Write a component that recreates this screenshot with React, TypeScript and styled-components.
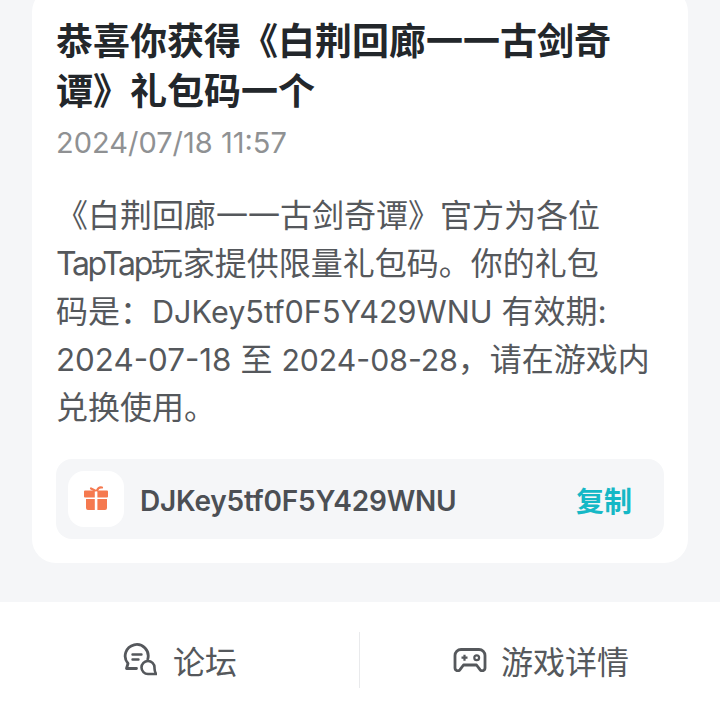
import React, { ReactElement } from 'react';
import styled, { createGlobalStyle } from 'styled-components';

const GlobalStyle = createGlobalStyle`
  html, body {
    margin: 0;
    padding: 0;
    background: #f5f6f8;
    font-family: Inter, "Noto Sans CJK SC", sans-serif;
  }
`;

const Page = styled.div`
  width: 720px;
  height: 718px;
  overflow: hidden;
  display: flex;
  flex-direction: column;
  background: #f5f6f8;
`;

const Card = styled.div`
  margin: -12px 32px 0 32px;
  height: 575px;
  box-sizing: border-box;
  padding: 29px 24px 24px 24px;
  background: #fff;
  border-radius: 24px;
  display: flex;
  flex-direction: column;
`;

const Title = styled.h1`
  margin: 0;
  font-size: 37px;
  line-height: 50px;
  font-weight: 700;
  color: #23272b;
`;

const DateText = styled.div`
  margin-top: 6px;
  font-size: 29px;
  line-height: 40px;
  color: #8f9193;
`;

const Body = styled.p`
  margin: 29px 0 0 0;
  font-size: 32px;
  line-height: 48px;
  color: #55585c;
`;

const Brand = styled.span`
  letter-spacing: -2.4px;
`;

const Latin = styled.span<{ $size: number }>`
  font-size: ${({ $size }) => $size}px;
`;

const CodeBar = styled.div`
  flex-shrink: 0;
  margin-top: 27px;
  height: 80px;
  box-sizing: border-box;
  padding: 0 32px 0 12px;
  display: flex;
  align-items: center;
  background: #f5f6f8;
  border-radius: 16px;
`;

const GiftBox = styled.div`
  width: 56px;
  height: 56px;
  border-radius: 16px;
  background: #fff;
  display: flex;
  align-items: center;
  justify-content: center;
`;

const Code = styled.div`
  flex: 1;
  margin: 3px 0 0 16px;
  font-size: 28px;
  font-weight: 600;
  letter-spacing: -0.2px;
  color: #4c4f54;
`;

const Copy = styled.div`
  margin-top: 2px;
  font-size: 28px;
  font-weight: 700;
  color: #15b8c6;
`;

const Footer = styled.div`
  margin-top: 39px;
  flex: 1;
  background: #fff;
  display: flex;
  align-items: flex-start;
  padding-top: 30px;
`;

const FooterItem = styled.div<{ $divider?: boolean }>`
  flex: 1;
  height: 56px;
  box-sizing: border-box;
  display: flex;
  align-items: center;
  justify-content: center;
  gap: 16px;
  font-size: 32px;
  color: #55585c;
  margin-left: ${({ $divider }) => ($divider ? '-1px' : '0')};
  border-left: ${({ $divider }) => ($divider ? '1px solid #e9eaec' : 'none')};
`;

const GameSvg = styled.svg`
  margin: 0 -2px 0 2px;
`;

const GiftIcon = (): ReactElement => (
  <svg width="28" height="28" viewBox="0 0 28 28" fill="#f5794f">
    <path d="M3 5.500h9.800v7H3a1 1 0 0 1-1-1v-5a1 1 0 0 1 1-1zM15.400 5.500H25a1 1 0 0 1 1 1v5a1 1 0 0 1-1 1h-9.600z" />
    <path d="M4 14h8.800v11H6a2 2 0 0 1-2-2zM15.400 14H25v9a2 2 0 0 1-2 2h-7.600z" />
    <path d="M9 3.500 13 5.500M15 5.500C16 3 18 2 20 2.500" fill="none" stroke="#f5794f" strokeWidth="2.200" strokeLinecap="round" />
  </svg>
);

const ForumIcon = (): ReactElement => (
  <svg width="34" height="34" viewBox="0 0 34 34" fill="none" stroke="#55585c" strokeWidth="2.800" strokeLinecap="round" strokeLinejoin="round">
    <path d="M13.500 25.500H3.500L5 20.500A11.500 11.500 0 1 1 24.800 16" />
    <path d="M9.500 11.500h9M9.500 16.500h6" strokeWidth="2.400" />
    <path d="M33 31H25A6.500 6.500 0 1 1 31.500 24.500c0 1.500-.3 3 1.500 6.500z" strokeWidth="2.600" />
  </svg>
);

const GameIcon = (): ReactElement => (
  <GameSvg width="34" height="24" viewBox="0 0 34 24" fill="none" stroke="#55585c" strokeWidth="2.800" strokeLinejoin="round">
    <path d="M8 1.500h18a6 6 0 0 1 6 6v12.500a2.800 2.800 0 0 1-5 1.700L23.500 17h-13L7 21.700a2.800 2.800 0 0 1-5-1.700V7.500a6 6 0 0 1 6-6z" />
    <path d="M8.500 9.700h6M11.500 6.700v6" strokeWidth="2.200" />
    <circle cx="23.700" cy="9.700" r="2.400" strokeWidth="2.200" />
  </GameSvg>
);

const App = (): ReactElement => (
  <Page>
    <GlobalStyle />
    <Card>
      <Title>恭喜你获得《白荆回廊一一古剑奇谭》礼包码一个</Title>
      <DateText>2024/07/18 11:57</DateText>
      <Body>
        《白荆回廊一一古剑奇谭》官方为各位
        <Brand>TapTap</Brand>玩家提供限量礼包码。你的礼包
        <br />
        码是{'\uFF1A'}
        <Latin $size={30.6}>DJKey5tf0F5Y429WNU</Latin> 有效期:
        <br />
        <Latin $size={31.3}>2024-07-18</Latin> 至 <Latin $size={30.2}>2024-08-28</Latin>
        {'\uFF0C'}请在游戏内
        <br />
        兑换使用。
      </Body>
      <CodeBar>
        <GiftBox>
          <GiftIcon />
        </GiftBox>
        <Code>DJKey5tf0F5Y429WNU</Code>
        <Copy>复制</Copy>
      </CodeBar>
    </Card>
    <Footer>
      <FooterItem>
        <ForumIcon />
        论坛
      </FooterItem>
      <FooterItem $divider>
        <GameIcon />
        游戏详情
      </FooterItem>
    </Footer>
  </Page>
);

export default App;
